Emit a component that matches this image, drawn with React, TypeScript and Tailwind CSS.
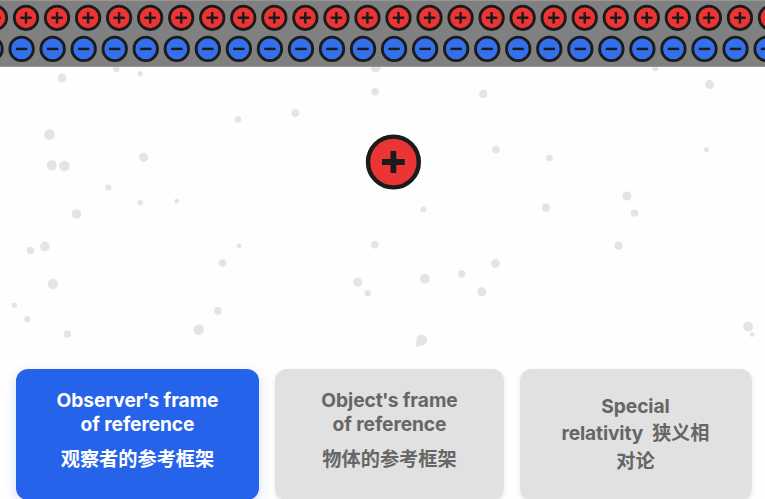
const DUST: [number, number, number][] = [
  [62, 78, 4.4], [116.3, 69, 3.2], [140.2, 73.8, 2.6], [238, 119.4, 3.2], [295.4, 113, 4], [375.8, 67, 5.2],
  [375.2, 91.7, 3.8], [483.3, 93.9, 4.1], [655.4, 68.2, 3], [709.6, 84.5, 4.4], [49.5, 134.5, 5.4],
  [51.7, 165.3, 5.1], [64.3, 166, 5.3], [143.6, 157.3, 4.6], [108.3, 187.6, 3], [140.2, 202.7, 2.6],
  [176.7, 201.2, 2.4], [76.4, 214, 4.8], [44.9, 246.4, 4.8], [30.6, 250.4, 3.7], [239, 245.8, 2.3],
  [222.5, 263.1, 3.8], [52.9, 284.2, 5.1], [14.3, 305.2, 2.6], [27.4, 319.2, 3.1], [67.4, 334, 3.8],
  [217.8, 310.9, 3.8], [198.8, 329.8, 5.2], [495.9, 149.5, 3.8], [423.3, 209.3, 2.9], [375, 244.7, 3.8],
  [495.4, 263.6, 4.5], [461.8, 274, 3.7], [424.8, 278.7, 4.9], [357.7, 282.3, 4.5], [367.8, 293.3, 3.2],
  [481.8, 291.8, 4.5], [421.7, 340, 5.4], [418, 344, 2.6], [549.4, 158, 3.3], [706.5, 149.4, 2.5],
  [626.9, 196, 4.5], [634.6, 213.1, 3.7], [546, 207.7, 4.1], [618.6, 245.7, 4.1], [748.1, 326.7, 4.9],
  [752.1, 334.6, 2.4],
];

const PITCH = 31.04;
const COLUMNS = Array.from({ length: 26 }, (_, i) => i - 1);

function Charge({ x, y, positive }: { x: number; y: number; positive: boolean }) {
  return (
    <g transform={`translate(${x} ${y})`} stroke="#1b1b1b">
      <circle r={11.75} fill={positive ? '#eb3434' : '#3470eb'} strokeWidth={2.8} />
      <path d={positive ? 'M-5.7 0H5.7M0-5.7V5.7' : 'M-5.7 0H5.7'} strokeWidth={2.4} />
    </g>
  );
}

function Simulation() {
  return (
    <svg className="block h-[353px] w-full shrink-0" viewBox="0 0 765 353">
      <rect width="765" height="353" fill="#fefefe" />
      {DUST.map(([x, y, r]) => (
        <circle key={`${x}-${y}`} cx={x} cy={y} r={r} fill="#e4e4e4" />
      ))}
      <rect width="765" height="67" fill="#808080" />
      <path d="M0 .5H765M0 66.5H765" stroke="#969696" />
      {COLUMNS.map((i) => (
        <g key={i}>
          <Charge x={26 + i * PITCH} y={17.8} positive />
          <Charge x={21.6 + i * PITCH} y={48.9} positive={false} />
        </g>
      ))}
      <circle cx="393.4" cy="162" r="25.4" fill="#eb3434" stroke="#1b1b1b" strokeWidth="4.4" />
      <path d="M382 162H404.7M393.4 151V173" stroke="#1b1b1b" strokeWidth="5.8" />
    </svg>
  );
}

const CARD =
  "flex h-[131px] shrink-0 flex-col items-center rounded-xl text-center text-[19.2px] font-bold font-['Inter','Noto_Sans_CJK_SC',sans-serif]";

export default function App() {
  return (
    <div className="flex h-[499px] w-[765px] flex-col overflow-hidden bg-[#fefefe]">
      <Simulation />
      <div className="flex gap-4 px-4 pt-4">
        <button className={`${CARD} w-[243px] bg-[#2563eb] pt-[19px] text-white shadow-[0_4px_12px_rgba(37,99,235,0.2)]`}>
          <span className="leading-6 tracking-[-0.08px]">Observe<span className="tracking-[-0.8px]">r'</span>s frame<br />of reference</span>
          <span className="mt-[9px] leading-[28px]">观察者的参考框架</span>
        </button>
        <button className={`${CARD} w-[229px] bg-[#e1e1e1] pt-[19px] text-[#666] shadow-[0_2px_4px_rgba(0,0,0,0.1)]`}>
          <span className="leading-6 tracking-[-0.08px]">Objec<span className="tracking-[-0.8px]">t'</span>s frame<br />of reference</span>
          <span className="mt-[9px] leading-[28px]">物体的参考框架</span>
        </button>
        <button className={`${CARD} w-[232px] bg-[#e1e1e1] pt-[25px] pr-[1px] text-[#666] shadow-[0_2px_4px_rgba(0,0,0,0.1)]`}>
          <span className="leading-6 tracking-[-0.08px]">Special</span>
          <span className="mt-px whitespace-pre leading-[28px]"><span className="tracking-[-0.15px]">relativity  </span>狭义相<br />对论</span>
        </button>
      </div>
    </div>
  );
}
